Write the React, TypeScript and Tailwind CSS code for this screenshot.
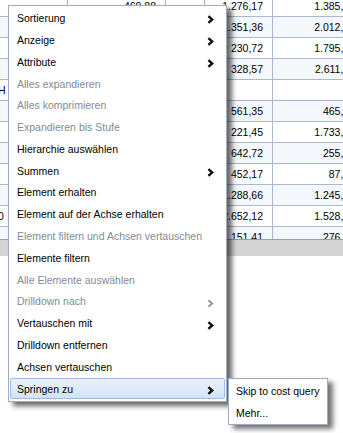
import React from "react";

type Item = { t: string; sub?: boolean; dis?: boolean; hl?: boolean };

const items: Item[] = [
  { t: "Sortierung", sub: true },
  { t: "Anzeige", sub: true },
  { t: "Attribute", sub: true },
  { t: "Alles expandieren", dis: true },
  { t: "Alles komprimieren", dis: true },
  { t: "Expandieren bis Stufe", dis: true },
  { t: "Hierarchie auswählen" },
  { t: "Summen", sub: true },
  { t: "Element erhalten" },
  { t: "Element auf der Achse erhalten" },
  { t: "Element filtern und Achsen vertauschen", dis: true },
  { t: "Elemente filtern" },
  { t: "Alle Elemente auswählen", dis: true },
  { t: "Drilldown nach", dis: true, sub: true },
  { t: "Vertauschen mit", sub: true },
  { t: "Drilldown entfernen" },
  { t: "Achsen vertauschen" },
  { t: "Springen zu", sub: true, hl: true },
];

type Row = { a?: string; b?: string; d?: string; e?: string };
const rows: Row[] = [
  { b: "469,88", d: "1.276,17", e: "1.385,42" },
  { b: "512,04", d: "1.351,36", e: "2.012,08" },
  { b: "318,90", d: "230,72", e: "1.795,31" },
  { b: "207,33", d: "328,57", e: "2.611,90" },
  { a: "H" },
  { b: "611,20", d: "561,35", e: "465,20" },
  { b: "98,15", d: "221,45", e: "1.733,64" },
  { b: "422,71", d: "642,72", e: "255,18" },
  { b: "39,80", d: "452,17", e: "87,45" },
  { b: "731,06", d: "1.288,66", e: "1.245,73" },
  { a: "0", b: "845,52", d: "2.652,12", e: "1.528,36" },
  { b: "120,77", d: "151,41", e: "276,50" },
];

function Chevron({ gray }: { gray?: boolean }) {
  return (
    <svg width="7" height="9" viewBox="0 0 7 9" className="translate-y-[2px] shrink-0">
      <path
        d="M1.4 1.2 L5.2 4.5 L1.4 7.8"
        fill="none"
        stroke={gray ? "#8d939b" : "#111111"}
        strokeWidth={gray ? 1.9 : 2.4}
        strokeLinejoin="miter"
      />
    </svg>
  );
}

export default function App() {
  return (
    <div
      className="relative w-[343px] h-[433px] overflow-hidden bg-white text-[10.5px] text-black"
      style={{ fontFamily: '"Liberation Sans", Arial, sans-serif' }}
    >
      {/* background table */}
      <div className="flex flex-col h-full">
        <div className="-mt-[4px] h-[243px] overflow-hidden">
          {rows.map((r, i) => (
            <div
              key={i}
              className={`grid grid-cols-[68px_98px_39px_68px_92px] w-[365px] h-[21px] border-b border-[#a9b8cf] ${
                i % 2 === 1 ? "bg-[#f4f7fb]" : "bg-white"
              }`}
            >
              <div className="border-r border-[#a9b8cf] leading-[20px] -ml-[2px] text-left">{r.a ?? ""}</div>
              <div className="border-r border-[#a9b8cf] leading-[20px] text-right pr-[9px]">{r.b ?? ""}</div>
              <div className="border-r border-[#a9b8cf] leading-[20px] text-right pr-[9px]"></div>
              <div className="border-r border-[#a9b8cf] leading-[20px] text-right pr-[9px]">{r.d ?? ""}</div>
              <div className="border-r border-[#a9b8cf] leading-[20px] text-right pr-[9px]">{r.e ?? ""}</div>
            </div>
          ))}
        </div>
        <div className="h-px bg-[#8e9fbb]" />
        <div className="h-[16px] bg-[#d4d4d4]" />
        <div className="flex-1 bg-white" />
      </div>

      {/* context menu */}
      <div className="absolute left-[8px] top-[5px] w-[219px] border border-[#9eabc0] bg-white py-[1.1px] shadow-[5px_4px_5px_rgba(0,0,0,0.6)]">
        {items.map((it, i) => (
          <div
            key={i}
            className={`mx-[1px] h-[21.8px] flex items-center justify-between pl-[6px] pr-[10px] border rounded-[2px] ${
              it.hl
                ? "border-[#9dbbe0] bg-[linear-gradient(#e9f2fc,#d3e3f5)]"
                : "border-transparent"
            }`}
          >
            <span
              className={`translate-y-[1px] whitespace-nowrap ${it.dis ? "text-[#838a94]" : "text-black"}`}
            >
              {it.t}
            </span>
            {it.sub ? <Chevron gray={it.dis} /> : null}
          </div>
        ))}
      </div>

      {/* submenu */}
      <div className="absolute left-[228px] top-[378px] w-[100px] border border-[#9eabc0] bg-white pt-[1px] shadow-[5px_4px_5px_rgba(0,0,0,0.55)]">
        {["Skip to cost query", "Mehr..."].map((s) => (
          <div key={s} className="h-[21.8px] flex items-center pl-[7px]">
            <span className="translate-y-[1px] whitespace-nowrap">{s}</span>
          </div>
        ))}
      </div>
    </div>
  );
}
